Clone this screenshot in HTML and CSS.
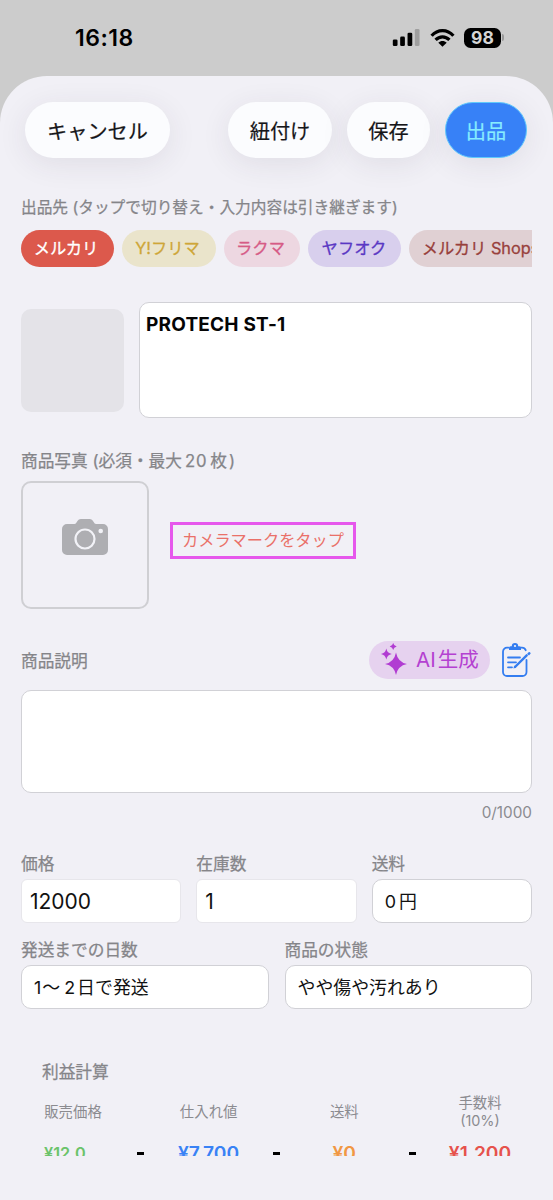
FILE: index.html
```html
<!DOCTYPE html>
<html lang="ja">
<head>
<meta charset="utf-8">
<title>出品</title>
<link rel="stylesheet" href="styles.css">
</head>
<body>
<div class="statusbar">
  <span class="clock">16:18</span>
  <div class="status-icons">
    <svg class="signal" width="29" height="17" viewBox="0 0 29 18"><rect x="0" y="11" width="5" height="7" rx="1.4"/><rect x="7.8" y="8" width="5" height="10" rx="1.4"/><rect x="15.6" y="4" width="5" height="14" rx="1.4"/><rect x="23.3" y="0" width="5" height="18" rx="1.4" opacity=".22"/></svg>
    <svg class="wifi" width="25" height="18" viewBox="0 0 26 19"><g fill="none" stroke="#000" stroke-width="3.4"><path d="M1.5 7.1C8-.1 18-.1 24.5 7.1"/><path d="M5.700 11.500c4.200-4.300 10.400-4.300 14.600 0"/></g><path d="M13 18.800l-4.400-4.300c2.400-2.300 6.400-2.300 8.800 0z"/></svg>
    <div class="battery">98</div>
    <i class="battery-tip"></i>
  </div>
</div>
<main class="sheet">
  <header class="toolbar">
    <button class="btn cancel">キャンセル</button>
    <button class="btn link">紐付け</button>
    <button class="btn save">保存</button>
    <button class="btn primary">出品</button>
  </header>
  <div class="content">
    <h2 class="label targets-label">出品先 (タップで切り替え・入力内容は引き継ぎます)</h2>
    <div class="chips">
      <span class="chip mercari">メルカリ</span>
      <span class="chip fleama">Y!フリマ</span>
      <span class="chip rakuma">ラクマ</span>
      <span class="chip yahuoku">ヤフオク</span>
      <span class="chip shops">メルカリ Shops</span>
    </div>
    <div class="title-row">
      <div class="thumb"></div>
      <div class="box title-box">PROTECH ST-1</div>
    </div>
    <h2 class="label photo-label">商品写真 <span>(</span>必須・最大<span class="num">20</span>枚<span class="paren">)</span></h2>
    <div class="photo-row">
      <div class="photo-add">
        <svg width="46" height="36" viewBox="0 0 46 36"><path fill="#aeaeb2" d="M5 5h7.500c1 0 1.700-1 2.300-2C16 1 17 0 19 0h8.500c2 0 3 1 4.200 3 .6 1 1.300 2 2.300 2h7a5 5 0 0 1 5 5v21a5 5 0 0 1-5 5H5a5 5 0 0 1-5-5V10a5 5 0 0 1 5-5z"/><circle cx="23" cy="20" r="9.500" fill="none" stroke="#f2f2f7" stroke-width="2.200"/><circle cx="38.700" cy="12" r="2.300" fill="#f2f2f7"/></svg>
      </div>
      <div class="hint">カメラマークをタップ</div>
    </div>
    <div class="desc-head">
      <h2 class="label">商品説明</h2>
      <span class="ai"><svg width="26" height="32" viewBox="0 0 26 32"><path d="M15 9.500Q16.800 19.200 26 21 16.800 22.800 15 32 13.200 22.800 4 21 13.200 19.200 15 9.500zM5.300 5.500Q6.200 10.100 10.800 11 6.200 11.900 5.300 16.500 4.400 11.900 0 11 4.400 10.100 5.300 5.500zM12.200 0Q12.800 2.900 15.700 3.500 12.800 4.100 12.200 7 11.600 4.100 8.700 3.500 11.600 2.900 12.200 0z"/></svg><span>AI<span class="ai-jp">生成</span></span></span>
      <svg class="clip" width="29" height="34" viewBox="0 0 29 34"><g fill="none" stroke="#347df0" stroke-width="1.800" stroke-linecap="round"><path d="M6.500 4.700H5a4 4 0 0 0-4 4V29a4 4 0 0 0 4 4h15.500a4 4 0 0 0 4-4V17M18.500 4.700h1.500a4 4 0 0 1 3.700 2.500"/><path d="M6 14.500h12M6 19.300h8M6 24.300h4"/><path stroke-width="2.400" d="M13 24l11.700-11.700"/></g><path fill="#347df0" d="M7 7V5Q7 3.500 8.600 3.300H9.800a3.200 3.200 0 0 1 6.400 0h1.200q1.600.2 1.600 1.700v2zM11.500 25.500l.7-3 2 2zM25.200 10.700l1.400-1.400q.8-.7 1.600.1t.1 1.600l-1.400 1.400z"/><circle cx="13" cy="3" r="1.100" fill="#f2f2f7"/></svg>
    </div>
    <div class="box desc-box"></div>
    <div class="counter">0/1000</div>
    <div class="grid three">
      <div><h2 class="label">価格</h2><div class="box number">12000</div></div>
      <div><h2 class="label">在庫数</h2><div class="box number">1</div></div>
      <div><h2 class="label">送料</h2><div class="box select"><span class="zero">0</span>円</div></div>
    </div>
    <div class="grid two">
      <div><h2 class="label">発送までの日数</h2><div class="box select"><span class="from">1</span>〜<span class="days">2</span>日で発送</div></div>
      <div><h2 class="label">商品の状態</h2><div class="box select">やや傷や汚れあり</div></div>
    </div>
    <section class="profit">
      <h2 class="label">利益計算</h2>
      <div class="heads"><span>販売価格</span><span>仕入れ値</span><span>送料</span><span>手数料<br>(10%)</span></div>
      <div class="values">
        <b class="green">¥12,0<small>…</small></b><i></i><b class="blue">¥7,700</b><i></i><b class="orange">¥0</b><i></i><b class="red">¥1,200</b>
      </div>
    </section>
  </div>
</main>
</body>
</html>
```
FILE: styles.css
```css
* { box-sizing: border-box; }
body {
  margin: 0;
  width: 553px;
  height: 1200px;
  overflow: hidden;
  background: #ccc;
  color: #111;
  font-family: Inter, "Noto Sans CJK JP", sans-serif;
}
.statusbar { height: 76px; display: flex; padding: 24px 49px 0 75px; justify-content: space-between; }
.clock { font-size: 23px; line-height: 29px; font-weight: 600; color: #000; letter-spacing: .5px; }
.status-icons { display: flex; align-items: center; height: 27px; }
.wifi { margin: 0 9px 0 9px; }
.battery { width: 37px; height: 20px; border-radius: 6.5px; background: #000; color: #d5d5d5; font-size: 17.5px; font-weight: 700; line-height: 20px; text-align: center; }
.battery-tip { width: 2px; height: 7px; margin-left: 1px; border-radius: 0 3px 3px 0; background: #999; }
.sheet { height: 1124px; border-radius: 47px 47px 0 0; background: #f1f0f6; overflow: hidden; }
.toolbar { display: flex; padding: 26px 26px 0 25px; }
.btn {
  height: 56px; padding: 2px 0 0; border: 0; border-radius: 28px;
  background: #fbfcfe; color: #161619; font: inherit; font-size: 20.2px; line-height: 56px;
  -webkit-text-stroke: .2px currentColor; box-shadow: 0 6px 30px rgba(50, 45, 70, .09);
}
.cancel { width: 145px; margin-right: auto; }
.link { width: 104px; margin-right: 15px; }
.save { width: 83px; margin-right: 15px; }
.primary { width: 82px; background: #3781f7; color: #87edff; border: 1.5px solid #60c9fb; line-height: 53px; }
.content { padding: 0 21px; }
.label { margin: 0; font-size: 16.700px; line-height: 24px; font-weight: 400; color: #858589; -webkit-text-stroke: .25px currentColor; white-space: nowrap; }
.targets-label { margin-top: 38px; font-size: 15.700px; }
.chips { display: flex; gap: 8px; margin-top: 10px; overflow: hidden; }
.chip { flex: none; height: 37px; border-radius: 19px; text-align: center; font-size: 16.300px; line-height: 37px; text-indent: -3px; -webkit-text-stroke: .3px currentColor; }
.mercari { width: 93px; background: #dc594c; color: #fff; }
.fleama { width: 94px; background: #eae4cb; color: #cea638; }
.rakuma { width: 76px; background: #edd7e1; color: #d65b86; }
.yahuoku { width: 93px; background: #d8cfed; color: #5a38c4; text-indent: -1px; }
.shops { width: 146px; background: #e0d0d3; color: #98403c; }
.title-row { display: flex; gap: 15px; align-items: center; margin-top: 35px; }
.thumb { width: 103px; height: 103px; border-radius: 10px; background: #e4e3e8; }
.box { background: #fff; border: 1px solid #d1d1d6; border-radius: 10px; }
.title-box { flex: 1; height: 116px; padding: 9px 6px; font-size: 19px; line-height: 25px; font-weight: 700; letter-spacing: .2px; color: #050505; }
.photo-label { margin-top: 31px; }
.paren { margin-left: 2px; }
.num { letter-spacing: .8px; margin: 0 3px; }
.photo-row { display: flex; gap: 21px; align-items: center; margin-top: 8px; }
.photo-add { width: 128px; height: 128px; border: 2px solid #cfcfd3; border-radius: 10px; display: flex; justify-content: center; padding-top: 36px; }
.hint { width: 186px; height: 37px; margin-bottom: 9px; border: 3px solid #e657ec; color: #ea7069; font-size: 16.200px; line-height: 31px; text-align: center; }
.desc-head { display: flex; align-items: center; margin-top: 32px; height: 38px; }
.desc-head .label { margin-top: 1px; }
.ai { display: flex; align-items: center; width: 121px; height: 38px; border-radius: 19px; margin-left: auto; padding-left: 12px; gap: 9px; background: #e6d2ef; color: #b441d1; fill: #b13cd2; font-size: 20.500px; line-height: 30px; white-space: nowrap; }
.ai-jp { margin-left: 2px; }
.ai svg { flex: none; margin-top: -3px; }
.clip { margin: 0 1px 0 12px; }
.desc-box { height: 103px; margin-top: 11px; }
.counter { margin-top: 9px; text-align: right; font-size: 15.300px; line-height: 22px; color: #8b8b90; }
.grid { display: grid; column-gap: 15px; }
.three { grid-template-columns: repeat(3, 1fr); margin-top: 28px; }
.two { grid-template-columns: 1fr 1fr; column-gap: 16px; margin-top: 14px; }
.grid .box { height: 44px; margin-top: 3px; color: #111; line-height: 43px; }
.two .label { padding-top: 1px; height: 25px; }
.number { padding-left: 8px; border-color: #e7e6eb; border-radius: 6px; font-size: 21px; }
.select { padding-left: 12px; font-size: 17.900px; }
.zero { margin-right: 3px; }
.from { margin-right: 1px; }
.days { margin: 0 2px 0 4px; }
.profit { margin: 51px 21px 0; height: 96px; overflow: hidden; }
.heads, .values { width: 469px; display: flex; align-items: center; }
.heads { height: 37px; margin-top: 9px; justify-content: space-between; color: #8b8b90; font-size: 14.400px; line-height: 18px; }
.heads span { width: 62px; text-align: center; }
.values { height: 30px; margin-top: 8px; font-size: 19.200px; line-height: 30px; }
.values b { width: 62px; font-weight: 600; display: flex; justify-content: center; white-space: nowrap; }
.values i { width: 7px; height: 3px; margin: 0 33.500px; background: #000; }
.values .green { justify-content: flex-start; padding-left: 2px; color: #6bc36a; font-size: 16.300px; }
.green small { font-size: 13px; opacity: .4; font-weight: 400; }
.blue { color: #3982f5; }
.orange { color: #f19743; }
.red { color: #e6524c; }
```
